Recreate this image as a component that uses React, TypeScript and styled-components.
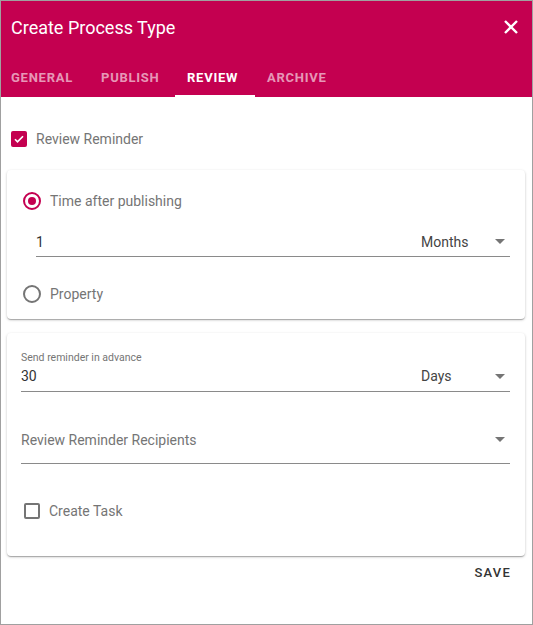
import React from 'react'
import styled, { createGlobalStyle } from 'styled-components'

const GlobalStyle = createGlobalStyle`
  * { box-sizing: border-box; }
  body {
    margin: 0;
    font-family: Roboto, "Liberation Sans", sans-serif;
    background: #fff;
  }
`

const ACCENT = '#c40050'

const Dialog = styled.div`
  width: 533px;
  height: 625px;
  border: 1px solid #a0a0a0;
  display: flex;
  flex-direction: column;
  background: #fff;
`

const Header = styled.header`
  background: ${ACCENT};
  color: #fff;
`

const TitleBar = styled.div`
  height: 52px;
  display: flex;
  align-items: center;
  justify-content: space-between;
  padding: 0 12px 0 10px;
`

const Title = styled.h1`
  margin: 0;
  font-size: 18px;
  font-weight: 400;
`

const CloseButton = styled.button`
  background: none;
  border: 0;
  padding: 0;
  width: 18px;
  height: 18px;
  display: flex;
  color: #fff;
  cursor: pointer;
`

const Tabs = styled.nav`
  display: flex;
  height: 44px;
  margin-left: -2px;
`

const Tab = styled.div<{ $active?: boolean; $w?: number }>`
  display: flex;
  align-items: center;
  width: ${(p) => (p.$w ? `${p.$w}px` : 'auto')};
  padding: 6px 12px 0;
  font-size: 13px;
  font-weight: 700;
  letter-spacing: 0.75px;
  text-transform: uppercase;
  color: ${(p) => (p.$active ? '#fff' : 'rgba(255,255,255,0.6)')};
  border-bottom: 2px solid ${(p) => (p.$active ? '#fff' : 'transparent')};
`

const Body = styled.main`
  flex: 1;
  display: flex;
  flex-direction: column;
  padding: 0 7px 0 6px;
`

const CheckRow = styled.label<{ $inset?: number }>`
  display: flex;
  align-items: center;
  gap: 9px;
  height: 32px;
  padding-left: ${(p) => p.$inset ?? 0}px;
  font-size: 14px;
  color: #757575;
`

const Box = styled.span<{ $checked?: boolean }>`
  width: 16px;
  height: 16px;
  border-radius: 2px;
  display: flex;
  align-items: center;
  justify-content: center;
  background: ${(p) => (p.$checked ? ACCENT : 'transparent')};
  border: ${(p) => (p.$checked ? 'none' : '2px solid #757575')};
`

const Radio = styled.span<{ $checked?: boolean }>`
  width: 18px;
  height: 18px;
  border-radius: 50%;
  border: 2px solid ${(p) => (p.$checked ? ACCENT : '#757575')};
  display: flex;
  align-items: center;
  justify-content: center;
  &::after {
    content: '';
    width: 8px;
    height: 8px;
    border-radius: 50%;
    background: ${(p) => (p.$checked ? ACCENT : 'transparent')};
  }
`

const Card = styled.section`
  background: #fff;
  border-radius: 4px;
  box-shadow: 0 1px 3px rgba(0, 0, 0, 0.2), 0 1px 1px rgba(0, 0, 0, 0.14),
    0 2px 1px -1px rgba(0, 0, 0, 0.12);
  display: flex;
  flex-direction: column;
`

const Spacer = styled.div<{ $h: number }>`
  height: ${(p) => p.$h}px;
  flex-shrink: 0;
`

const Field = styled.div<{ $left: number }>`
  display: flex;
  flex-direction: column;
  margin: 0 15px 0 ${(p) => p.$left}px;
`

const SmallLabel = styled.span`
  font-size: 10.5px;
  line-height: 13px;
  color: #757575;
`

const InputLine = styled.div<{ $h: number; $pb?: number }>`
  display: flex;
  align-items: center;
  height: ${(p) => p.$h}px;
  padding-bottom: ${(p) => p.$pb ?? 0}px;
  border-bottom: 1px solid #8a8a8a;
  font-size: 14px;
  color: #333;
`

const Value = styled.span`
  flex: 1;
`

const Placeholder = styled.span`
  flex: 1;
  color: #757575;
`

const Unit = styled.span`
  width: 74px;
  color: #444;
`

const Caret = styled.span`
  width: 0;
  height: 0;
  border-left: 5px solid transparent;
  border-right: 5px solid transparent;
  border-top: 5px solid #757575;
  margin-right: 5px;
`

const Actions = styled.div`
  display: flex;
  justify-content: flex-end;
  padding: 5px 14px 0 0;
`

const SaveButton = styled.button`
  background: none;
  border: 0;
  font-family: inherit;
  font-size: 13px;
  font-weight: 500;
  letter-spacing: 1.2px;
  color: #333;
  padding: 4px 0;
`

const Check = () => (
  <svg width="12" height="12" viewBox="0 0 24 24">
    <path d="M4 12.5l5 5L20 6.5" stroke="#fff" strokeWidth="3.4" fill="none" />
  </svg>
)

const App = () => {
  return (
    <>
      <GlobalStyle />
      <Dialog>
        <Header>
          <TitleBar>
            <Title>Create Process Type</Title>
            <CloseButton aria-label="close">
              <svg width="18" height="18" viewBox="0 0 18 18">
                <path d="M3 3l12 12M15 3L3 15" stroke="#fff" strokeWidth="2.4" />
              </svg>
            </CloseButton>
          </TitleBar>
          <Tabs>
            <Tab $w={90}>General</Tab>
            <Tab $w={86}>Publish</Tab>
            <Tab $w={80} $active>
              Review
            </Tab>
            <Tab>Archive</Tab>
          </Tabs>
        </Header>

        <Body>
          <Spacer $h={26} />
          <CheckRow $inset={4}>
            <Box $checked>
              <Check />
            </Box>
            Review Reminder
          </CheckRow>
          <Spacer $h={15} />

          <Card>
            <Spacer $h={15} />
            <CheckRow $inset={16}>
              <Radio $checked />
              Time after publishing
            </CheckRow>
            <Spacer $h={10} />
            <Field $left={29}>
              <InputLine $h={30}>
                <Value>1</Value>
                <Unit>Months</Unit>
                <Caret />
              </InputLine>
            </Field>
            <Spacer $h={21} />
            <CheckRow $inset={16}>
              <Radio />
              Property
            </CheckRow>
            <Spacer $h={9} />
          </Card>

          <Spacer $h={14} />

          <Card>
            <Spacer $h={18} />
            <Field $left={14}>
              <SmallLabel>Send reminder in advance</SmallLabel>
              <InputLine $h={28} $pb={3}>
                <Value>30</Value>
                <Unit>Days</Unit>
                <Caret />
              </InputLine>
            </Field>
            <Spacer $h={24} />
            <Field $left={14}>
              <InputLine $h={48}>
                <Placeholder>Review Reminder Recipients</Placeholder>
                <Caret />
              </InputLine>
            </Field>
            <Spacer $h={31} />
            <CheckRow $inset={17}>
              <Box />
              Create Task
            </CheckRow>
            <Spacer $h={29} />
          </Card>

          <Actions>
            <SaveButton>SAVE</SaveButton>
          </Actions>
        </Body>
      </Dialog>
    </>
  )
}

export default App
